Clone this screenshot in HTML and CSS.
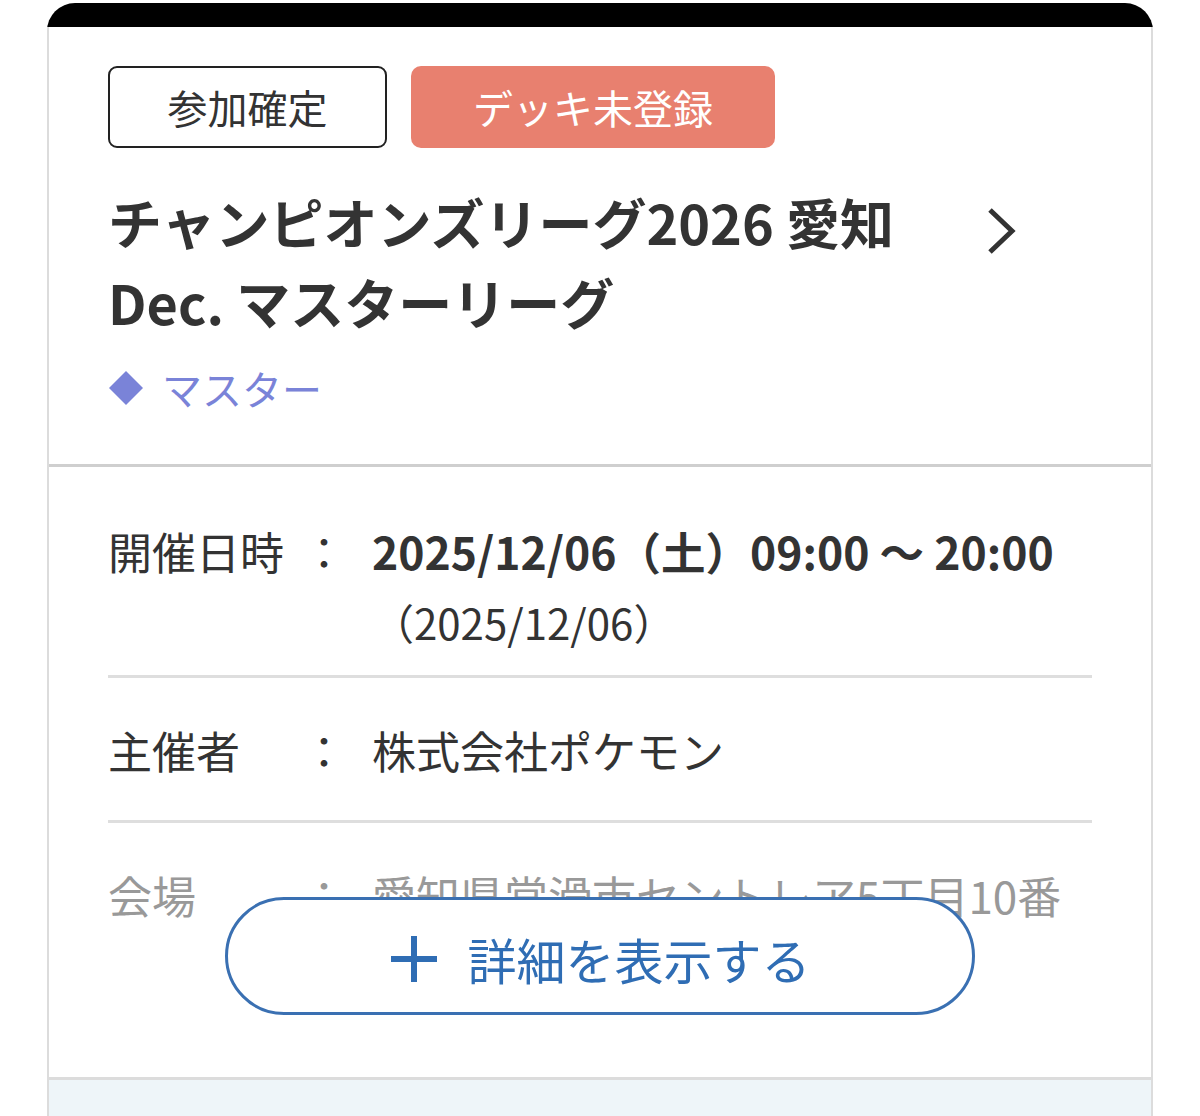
FILE: index.html
```html
<!DOCTYPE html>
<html lang="ja">
<head>
<meta charset="utf-8">
<title>イベント</title>
<link rel="stylesheet" href="styles.css">
</head>
<body>
<div class="page">
  <div class="card">
    <div class="topbar"></div>
    <div class="card-body">
      <div class="head">
        <div class="tags">
          <span class="tag tag-entry">参加確定</span>
          <span class="tag tag-deck">デッキ未登録</span>
        </div>
        <div class="title-row">
          <h1 class="title">チャンピオンズリーグ2026 愛知 Dec. マスターリーグ</h1>
          <svg class="chevron" width="34" height="50" viewBox="0 0 34 50"><path d="M4 4 L26 25 L4 46" fill="none" stroke="#333" stroke-width="5"/></svg>
        </div>
        <div class="tier">
          <svg class="diamond" width="36" height="36" viewBox="0 0 36 36"><path d="M18 1 L35 18 L18 35 L1 18 Z" fill="#7a83d8"/></svg>
          <span>マスター</span>
        </div>
      </div>
      <div class="details">
        <div class="details-clip">
          <div class="row row-first">
            <div class="label">開催日時</div>
            <div class="colon">：</div>
            <div class="value">
              <div class="value-main">2025/12/06（土）09:00 〜 20:00</div>
              <div class="value-sub">（2025/12/06）</div>
            </div>
          </div>
          <div class="row">
            <div class="label">主催者</div>
            <div class="colon">：</div>
            <div class="value">株式会社ポケモン</div>
          </div>
          <div class="row row-faded">
            <div class="label">会場</div>
            <div class="colon">：</div>
            <div class="value">愛知県常滑市セントレア5丁目10番</div>
          </div>
        </div>
        <div class="more-wrap">
          <button class="more-btn" type="button">
            <svg class="plus" width="46" height="46" viewBox="0 0 46 46"><path d="M0 23 H46 M23 0 V46" stroke="#2f6db4" stroke-width="6"/></svg>
            <span>詳細を表示する</span>
          </button>
        </div>
      </div>
      <div class="foot"></div>
    </div>
  </div>
</div>
</body>
</html>
```
FILE: styles.css
```css
* { box-sizing: border-box; }
html, body { margin: 0; padding: 0; background: #fff; }
body {
  font-family: "Noto Sans CJK JP", "Noto Sans", sans-serif;
  color: #333;
}
.page { padding: 3px 47px 0; }
.card {
  width: 1106px;
  border-radius: 28px 28px 0 0;
  overflow: hidden;
  background: #fff;
}
.topbar { height: 24px; background: #000; }
.card-body {
  border-left: 2px solid #dcdcdc;
  border-right: 2px solid #dcdcdc;
}
.head {
  padding: 39px 59px 48px;
  border-bottom: 3px solid #cfcfcf;
}
.tags { display: flex; gap: 24px; }
.tag {
  display: inline-flex;
  align-items: center;
  justify-content: center;
  height: 82px;
  font-size: 40px;
  line-height: 1;
  border-radius: 10px;
}
.tag-entry {
  width: 279px;
  border: 2px solid #222;
  color: #333;
  border-radius: 9px;
}
.tag-deck {
  width: 364px;
  background: #e8806f;
  color: #fff;
}
.title-row {
  display: flex;
  align-items: flex-start;
  margin-top: 34px;
}
.title {
  margin: 0;
  width: 850px;
  font-size: 54px;
  font-weight: 700;
  line-height: 80px;
  color: #333;
}
.chevron { margin: 24px 0 0 28px; flex: none; }
.tier {
  display: flex;
  align-items: center;
  gap: 18px;
  margin-top: 18px;
  height: 56px;
  font-size: 40px;
  color: #7a83d8;
}
.diamond { flex: none; }
.details { position: relative; }
.details-clip {
  height: 471px;
  overflow: hidden;
  padding: 0 59px;
}
.row {
  display: grid;
  grid-template-columns: 194px 70px 1fr;
  padding: 42px 0 40px;
  border-bottom: 3px solid #dedede;
  font-size: 44px;
  line-height: 60px;
}
.row-first { padding-top: 54px; padding-bottom: 29px; }
.row-faded { color: #999; border-bottom: none; }
.label { white-space: nowrap; }
.colon { white-space: nowrap; }
.value { white-space: nowrap; }
.value-main { font-weight: 700; font-size: 44.5px; }
.value-sub { margin-top: 17px; line-height: 48px; font-size: 42px; }
.more-wrap {
  position: relative;
  z-index: 1;
  display: flex;
  justify-content: center;
  margin-top: -41px;
  padding-bottom: 62px;
}
.more-btn {
  display: flex;
  align-items: center;
  justify-content: center;
  gap: 30px;
  width: 750px;
  height: 118px;
  background: #fff;
  border: 3px solid #3a70b2;
  border-radius: 60px;
  font-family: inherit;
  font-size: 49px;
  color: #2f6db4;
  padding: 5px 0 0 2px;
  cursor: pointer;
}
.plus { flex: none; }
.foot {
  border-top: 3px solid #dcdcdc;
  height: 40px;
  background: #eef5f9;
}
```
